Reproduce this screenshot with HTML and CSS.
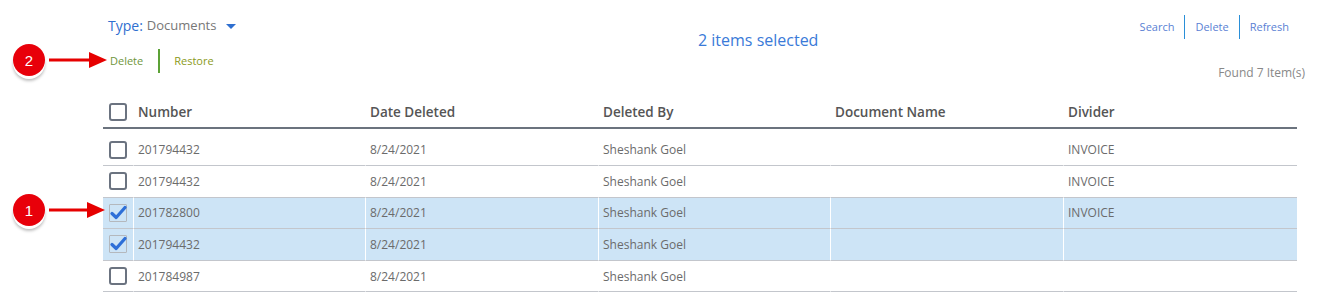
FILE: index.html
```html
<!DOCTYPE html>
<html lang="en">
<head>
    <meta charset="UTF-8">
    <title>Recycle Bin - Documents</title>
    <link rel="stylesheet" href="styles.css">
</head>
<body>
    <div class="page">
        <div class="toolbar">
            <div class="toolbar-left">
                <div class="type-filter">
                    <span class="type-label">Type:</span>
                    <span class="type-value">Documents</span>
                    <span class="caret"></span>
                </div>
                <div class="bulk-actions">
                    <a class="bulk-delete">Delete</a>
                    <a class="bulk-restore">Restore</a>
                </div>
            </div>
            <div class="selection-count">2 items selected</div>
            <div class="toolbar-right">
                <div class="links">
                    <a>Search</a>
                    <a>Delete</a>
                    <a>Refresh</a>
                </div>
                <div class="found">Found 7 Item(s)</div>
            </div>
        </div>

        <table class="grid">
            <colgroup>
                <col class="col-check">
                <col class="col-number">
                <col class="col-date">
                <col class="col-by">
                <col class="col-name">
                <col class="col-divider">
            </colgroup>
            <thead>
                <tr>
                    <th><span class="check"></span></th>
                    <th>Number</th>
                    <th>Date Deleted</th>
                    <th>Deleted By</th>
                    <th>Document Name</th>
                    <th>Divider</th>
                </tr>
            </thead>
            <tbody>
                <tr>
                    <td><span class="check"></span></td>
                    <td>201794432</td>
                    <td>8/24/2021</td>
                    <td>Sheshank Goel</td>
                    <td></td>
                    <td>INVOICE</td>
                </tr>
                <tr>
                    <td><span class="check"></span></td>
                    <td>201794432</td>
                    <td>8/24/2021</td>
                    <td>Sheshank Goel</td>
                    <td></td>
                    <td>INVOICE</td>
                </tr>
                <tr class="selected">
                    <td><span class="check checked"><svg viewBox="0 0 18 18" width="18" height="18"><path d="M3 9.5 L7.2 13.5 L16 3.5" fill="none" stroke="#2d6fd8" stroke-width="3.2" stroke-linecap="round" stroke-linejoin="round"/></svg></span></td>
                    <td>201782800</td>
                    <td>8/24/2021</td>
                    <td>Sheshank Goel</td>
                    <td></td>
                    <td>INVOICE</td>
                </tr>
                <tr class="selected">
                    <td><span class="check checked"><svg viewBox="0 0 18 18" width="18" height="18"><path d="M3 9.5 L7.2 13.5 L16 3.5" fill="none" stroke="#2d6fd8" stroke-width="3.2" stroke-linecap="round" stroke-linejoin="round"/></svg></span></td>
                    <td>201794432</td>
                    <td>8/24/2021</td>
                    <td>Sheshank Goel</td>
                    <td></td>
                    <td></td>
                </tr>
                <tr>
                    <td><span class="check"></span></td>
                    <td>201784987</td>
                    <td>8/24/2021</td>
                    <td>Sheshank Goel</td>
                    <td></td>
                    <td></td>
                </tr>
            </tbody>
        </table>

        <!-- annotation callouts -->
        <div class="callout callout-2">
            <span class="badge">2</span>
            <svg class="arrow" width="58" height="16" viewBox="0 0 58 16"><rect x="0" y="6.5" width="42" height="3" fill="#e60000"/><path d="M40 0 L58 8 L40 16 Z" fill="#e60000"/></svg>
        </div>
        <div class="callout callout-1">
            <span class="badge">1</span>
            <svg class="arrow" width="56" height="16" viewBox="0 0 56 16"><rect x="0" y="6.5" width="40" height="3" fill="#e60000"/><path d="M38 0 L56 8 L38 16 Z" fill="#e60000"/></svg>
        </div>
    </div>
</body>
</html>
```

FILE: styles.css
```css
body {
    margin: 0;
    font-family: "Open Sans", "Liberation Sans", sans-serif;
    color: #666;
    background: #fff;
}
a {
    cursor: pointer;
}
.page {
    position: relative;
    padding-left: 103px;
}
.toolbar {
    display: flex;
    width: 1202px;
    height: 96px;
    padding-top: 14px;
    box-sizing: border-box;
}
.toolbar-left {
    width: 595px;
}
.type-filter {
    display: flex;
    align-items: center;
    height: 22px;
    padding-left: 5px;
}
.type-label {
    font-size: 14px;
    color: #2f6fd0;
}
.type-value {
    margin-left: 4px;
    font-size: 13px;
    color: #777;
}
.caret {
    width: 0;
    height: 0;
    margin: 3px 0 0 10px;
    border-left: 5px solid transparent;
    border-right: 5px solid transparent;
    border-top: 5px solid #2f6fd0;
}
.bulk-actions {
    display: flex;
    align-items: center;
    margin-top: 13px;
    padding-left: 7px;
    font-size: 11px;
}
.bulk-delete {
    line-height: 24px;
    padding-right: 15px;
    border-right: 2px solid #5ca236;
    color: #6f963b;
}
.bulk-restore {
    line-height: 24px;
    padding-left: 14px;
    color: #8b9a20;
}
.selection-count {
    padding-top: 15px;
    font-size: 16px;
    line-height: 22px;
    color: #3a7ad8;
}
.toolbar-right {
    margin-left: auto;
    text-align: right;
}
.links {
    display: flex;
    justify-content: flex-end;
    margin-top: 1px;
    font-size: 11px;
}
.links a {
    line-height: 24px;
    padding: 0 10px;
    color: #5a7fd4;
    border-left: 1px solid #2a8fd8;
}
.links a:first-child {
    border-left: none;
}
.links a:last-child {
    padding-right: 16px;
}
.found {
    margin-top: 25px;
    font-size: 12px;
    line-height: 18px;
    color: #888;
}
.grid {
    width: 1194px;
    table-layout: fixed;
    border-collapse: separate;
    border-spacing: 0;
}
.col-check { width: 30px; }
.col-number { width: 232px; }
.col-date { width: 233px; }
.col-by { width: 232px; }
.col-name { width: 233px; }
.col-divider { width: 234px; }
.grid th {
    height: 31px;
    padding: 0 0 0 5px;
    text-align: left;
    font-size: 13.5px;
    font-weight: 600;
    color: #555;
    border-bottom: 2px solid #6b737e;
    vertical-align: middle;
}
.grid th:first-child,
.grid td:first-child {
    padding-left: 6px;
}
.grid td {
    height: 31.6px;
    padding: 0 0 0 4px;
    font-size: 12px;
    color: #6b6b6b;
    border-bottom: 1px solid #c3c6cc;
    vertical-align: middle;
    box-sizing: border-box;
}
.grid td + td {
    border-left: 1px solid #fff;
}
.grid tbody tr:first-child td {
    border-top: 5px solid #fff;
    height: 37px;
}
.grid tr.selected td {
    background: #cde4f6;
}
.check {
    display: block;
    width: 18px;
    height: 18px;
    box-sizing: border-box;
    border: 2px solid #6b7380;
    border-radius: 3px;
}
.check.checked {
    border: 1px solid #b4b8bd;
    border-radius: 1px;
}
.check.checked svg {
    display: block;
    margin: -1px 0 0 -1px;
}
.callout {
    position: absolute;
    left: 13px;
    display: flex;
    align-items: center;
}
.callout-2 {
    top: 44px;
}
.callout-1 {
    top: 194px;
}
.badge {
    display: flex;
    align-items: center;
    justify-content: center;
    width: 32px;
    height: 32px;
    border-radius: 50%;
    background: #e8000a;
    color: #fff;
    font-family: "Liberation Sans", Arial, sans-serif;
    font-size: 15px;
    box-shadow: 0 3px 0 #fff, 0 5px 3px rgba(0, 0, 0, 0.25);
}
.arrow {
    display: block;
    margin-left: 4px;
}
```
